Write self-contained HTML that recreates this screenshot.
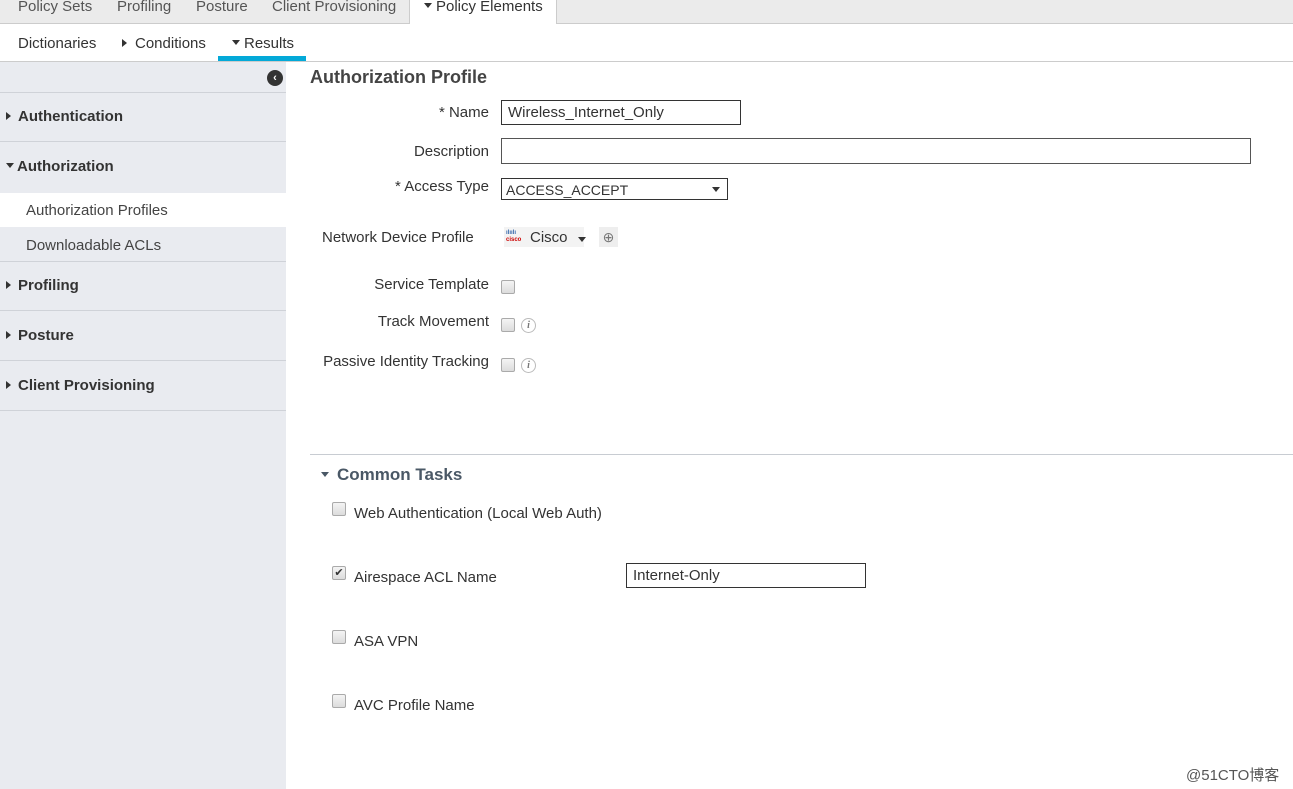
<!DOCTYPE html>
<html><head><style>
body{margin:0;width:1293px;height:789px;position:relative;overflow:hidden;background:#fff;font-family:"Liberation Sans",Arial,sans-serif;color:#333;font-size:15px}
.a{position:absolute;white-space:nowrap}
.tab{top:-2px;font-size:15px;color:#555}
.side{position:absolute;left:0;top:62px;width:286px;height:727px;background:#e9ebf0}
.si{position:absolute;left:0;width:286px;border-bottom:1px solid #cfd2d8;font-weight:bold;font-size:15px;color:#333}
.tri{display:inline-block;width:0;height:0;border-top:4px solid transparent;border-bottom:4px solid transparent;border-left:5px solid #333;margin-right:7px;vertical-align:1px}
.dn{display:inline-block;width:0;height:0;border-left:4px solid transparent;border-right:4px solid transparent;border-top:5px solid #333;margin-right:4px;vertical-align:3px}
.lbl{font-size:15px;color:#333;text-align:right;width:200px}
.inp{position:absolute;border:1px solid #333;background:#fff;font-size:15px;box-sizing:border-box;padding-left:6px}
.cb{position:absolute;width:12px;height:12px;border:1px solid #aaa;border-radius:2px;background:linear-gradient(#f4f4f4,#dcdcdc)}
.info{position:absolute;width:13px;height:13px;border:1px solid #bbb;border-radius:50%;font:italic bold 10px "Liberation Serif",serif;color:#777;text-align:center;line-height:13px}
</style></head><body>
<div class="a" style="left:0;top:0;width:1293px;height:23px;background:#ebebeb;border-bottom:1px solid #ccc"></div>
<div class="a" style="left:409px;top:0;width:146px;height:24px;background:#fff;border-left:1px solid #ccc;border-right:1px solid #ccc"></div>
<div class="a tab" style="left:18px">Policy Sets</div>
<div class="a tab" style="left:117px">Profiling</div>
<div class="a tab" style="left:196px">Posture</div>
<div class="a tab" style="left:272px">Client Provisioning</div>
<div class="a tab" style="left:424px;color:#333"><span class="dn"></span>Policy Elements</div>
<div class="a" style="left:0;top:61px;width:1293px;height:1px;background:#ccc"></div>
<div class="a" style="left:18px;top:35px">Dictionaries</div>
<div class="a" style="left:122px;top:35px"><span class="tri" style="margin-right:8px"></span>Conditions</div>
<div class="a" style="left:232px;top:35px"><span class="dn"></span>Results</div>
<div class="a" style="left:218px;top:56px;width:88px;height:5px;background:#03a9d8"></div>
<div class="side"></div>
<div class="a" style="left:267px;top:70px;width:16px;height:16px;border-radius:50%;background:#333;color:#fff;font-size:11px;text-align:center;line-height:16px;font-weight:bold">‹</div>
<div class="si" style="top:92px;height:0;"></div>
<div class="si" style="top:93px;height:49px;line-height:47px;padding-left:6px;box-sizing:border-box"><span class="tri"></span>Authentication</div>
<div class="si" style="top:143px;height:49px;line-height:47px;padding-left:6px;box-sizing:border-box;border:0"><span class="dn" style="margin-right:3px"></span>Authorization</div>
<div class="a" style="left:0;top:193px;width:286px;height:34px;background:#fff"></div>
<div class="a" style="left:26px;top:202px;color:#444">Authorization Profiles</div>
<div class="a" style="left:26px;top:237px;color:#444">Downloadable ACLs</div>
<div class="si" style="top:261px;height:0"></div>
<div class="si" style="top:262px;height:49px;line-height:47px;padding-left:6px;box-sizing:border-box"><span class="tri"></span>Profiling</div>
<div class="si" style="top:312px;height:49px;line-height:47px;padding-left:6px;box-sizing:border-box"><span class="tri"></span>Posture</div>
<div class="si" style="top:362px;height:49px;line-height:47px;padding-left:6px;box-sizing:border-box"><span class="tri"></span>Client Provisioning</div>

<div class="a" style="left:310px;top:67px;font-size:18px;font-weight:bold;color:#444">Authorization Profile</div>
<div class="a lbl" style="left:289px;top:104px">* Name</div>
<div class="inp" style="left:501px;top:100px;width:240px;height:25px;line-height:23px">Wireless_Internet_Only</div>
<div class="a lbl" style="left:289px;top:143px">Description</div>
<div class="inp" style="left:501px;top:138px;width:750px;height:26px;border-color:#555"></div>
<div class="a lbl" style="left:289px;top:178px">* Access Type</div>
<div class="inp" style="left:501px;top:178px;width:227px;height:22px;line-height:22px;font-size:14px;padding-left:4px">ACCESS_ACCEPT<span style="position:absolute;right:7px;top:8px;border-left:4px solid transparent;border-right:4px solid transparent;border-top:5px solid #333"></span></div>
<div class="a" style="left:322px;top:229px">Network Device Profile</div>
<div class="a" style="left:504px;top:227px;width:80px;height:20px;background:#f3f3f3"></div>
<div class="a" style="left:506px;top:230px;font-size:6px;line-height:7px;color:#c00;font-weight:bold"><span style="color:#36a">ılıılı</span><br>cisco</div>
<div class="a" style="left:530px;top:229px">Cisco</div>
<div class="a" style="left:578px;top:237px;border-left:4px solid transparent;border-right:4px solid transparent;border-top:5px solid #333"></div>
<div class="a" style="left:599px;top:227px;width:19px;height:20px;background:#eee;color:#777;font-size:14px;text-align:center;line-height:20px">⊕</div>
<div class="a lbl" style="left:289px;top:276px">Service Template</div>
<div class="cb" style="left:501px;top:280px"></div>
<div class="a lbl" style="left:289px;top:313px">Track Movement</div>
<div class="cb" style="left:501px;top:318px"></div><div class="info" style="left:521px;top:318px">i</div>
<div class="a lbl" style="left:289px;top:353px">Passive Identity Tracking</div>
<div class="cb" style="left:501px;top:358px"></div><div class="info" style="left:521px;top:358px">i</div>

<div class="a" style="left:310px;top:454px;width:983px;height:1px;background:#c8ccd2"></div>
<div class="a" style="left:321px;top:465px;font-size:17px;font-weight:bold;color:#4a5866"><span class="dn" style="border-top-color:#4a5866;margin-right:8px"></span>Common Tasks</div>
<div class="cb" style="left:332px;top:502px"></div>
<div class="a" style="left:354px;top:505px">Web Authentication (Local Web Auth)</div>
<div class="cb" style="left:332px;top:566px;font-size:11px;line-height:12px;text-align:center;color:#333">✔</div>
<div class="a" style="left:354px;top:569px">Airespace ACL Name</div>
<div class="inp" style="left:626px;top:563px;width:240px;height:25px;line-height:23px">Internet-Only</div>
<div class="cb" style="left:332px;top:630px"></div>
<div class="a" style="left:354px;top:633px">ASA VPN</div>
<div class="cb" style="left:332px;top:694px"></div>
<div class="a" style="left:354px;top:697px">AVC Profile Name</div>
<div class="a" style="left:1186px;top:764px;font-size:15px;color:#555;font-family:'Liberation Sans','Noto Sans CJK SC',sans-serif">@51CTO博客</div>
</body></html>
